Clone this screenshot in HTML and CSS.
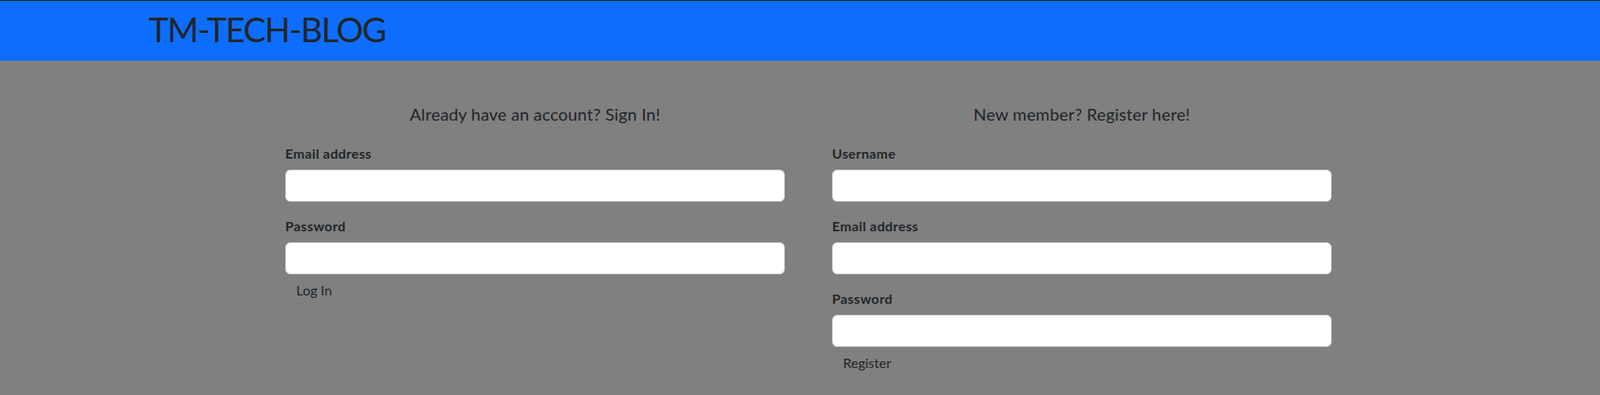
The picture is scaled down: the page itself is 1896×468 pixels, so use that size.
FILE: index.html
```html
<!DOCTYPE html>
<html lang="en">
<head>
<meta charset="utf-8">
<title>TM-TECH-BLOG</title>
<link rel="stylesheet" href="styles.css">
</head>
<body>
<header class="navbar">
  <h1 class="brand">TM-TECH-BLOG</h1>
</header>
<main class="forms">
  <section class="panel">
    <h2 class="panel-title">Already have an account? Sign In!</h2>
    <form class="form">
      <div class="field">
        <label class="field-label" for="login-email">Email address</label>
        <input class="field-input" id="login-email" type="email">
      </div>
      <div class="field last">
        <label class="field-label" for="login-password">Password</label>
        <input class="field-input" id="login-password" type="password">
      </div>
      <button class="btn" type="button">Log In</button>
    </form>
  </section>
  <section class="panel">
    <h2 class="panel-title">New member? Register here!</h2>
    <form class="form">
      <div class="field">
        <label class="field-label" for="reg-username">Username</label>
        <input class="field-input" id="reg-username" type="text">
      </div>
      <div class="field">
        <label class="field-label" for="reg-email">Email address</label>
        <input class="field-input" id="reg-email" type="email">
      </div>
      <div class="field last">
        <label class="field-label" for="reg-password">Password</label>
        <input class="field-input" id="reg-password" type="password">
      </div>
      <button class="btn" type="button">Register</button>
    </form>
  </section>
</main>
</body>
</html>
```
FILE: styles.css
```css
* {
  box-sizing: border-box;
}

html,
body {
  margin: 0;
  padding: 0;
}

body {
  background: #808080;
  color: #212529;
  font-family: "Lato", "Open Sans", sans-serif;
  font-size: 16px;
  line-height: 1.5;
  min-height: 468px;
}

.navbar {
  background: #0d6efd;
  border-top: 1px solid #1b1f24;
  padding: 10px 0 13px 176px;
}

.brand {
  margin: 0;
  font-size: 40px;
  font-weight: 400;
  line-height: 48px;
  letter-spacing: -1.4px;
  color: #212529;
}

.forms {
  display: flex;
  gap: 56px;
  padding: 51px 318px 0 338px;
}

.panel {
  flex: 1 1 0;
  min-width: 0;
}

.panel-title {
  margin: 0 0 22px;
  font-size: 20px;
  font-weight: 400;
  line-height: 24px;
  letter-spacing: 0.15px;
  text-align: center;
}

.form {
  display: flex;
  flex-direction: column;
  align-items: flex-start;
}

.field {
  width: 100%;
  margin-bottom: 16px;
}

.field.last {
  margin-bottom: 0;
}

.field-label {
  display: block;
  padding-top: 1px;
  margin-bottom: 7px;
  font-weight: 700;
  line-height: 24px;
  letter-spacing: 0.4px;
}

.field-input {
  display: block;
  width: 100%;
  height: 38px;
  padding: 6px 12px;
  font: inherit;
  background: #fff;
  border: 1px solid #ced4da;
  border-radius: 6px;
  color: #212529;
}

.btn {
  padding: 6px 12px;
  font: inherit;
  line-height: 24px;
  color: #212529;
  background: transparent;
  border: 1px solid transparent;
  border-radius: 6px;
  cursor: pointer;
}
```
